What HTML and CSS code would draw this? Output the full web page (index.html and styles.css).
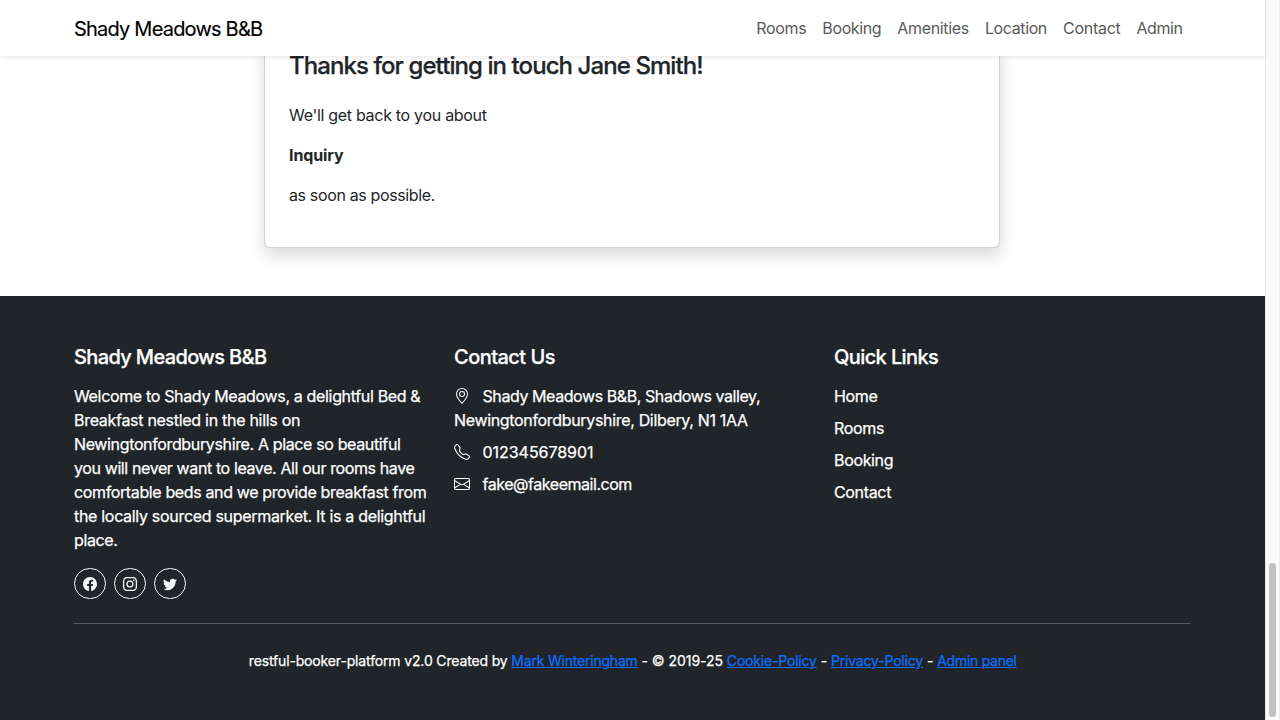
FILE: index.html
```html
<!DOCTYPE html>
<html lang="en">
<head>
<meta charset="utf-8">
<title>Shady Meadows B&amp;B</title>
<link rel="stylesheet" href="styles.css">
</head>
<body>
<div class="viewport">
  <div class="page">
    <nav class="navbar">
      <div class="container navbar-inner">
        <a class="brand">Shady Meadows B&amp;B</a>
        <div class="nav-links">
          <a class="w50">Rooms</a><a class="w59">Booking</a><a class="w72">Amenities</a><a class="w62">Location</a><a class="w57">Contact</a><a class="w46">Admin</a>
        </div>
      </div>
    </nav>
    <main class="contact">
      <div class="card">
        <h3 class="card-title">Thanks for getting in touch Jane Smith!</h3>
        <p class="t30">We'll get back to you about</p>
        <p class="subject">Inquiry</p>
        <p class="t36">as soon as possible.</p>
      </div>
    </main>
    <footer class="footer">
      <div class="container">
        <div class="columns">
          <div>
            <h5>Shady Meadows B&amp;B</h5>
            <p class="about"><span class="t34">Welcome to Shady Meadows, a delightful Bed &amp;</span><br><span class="t29">Breakfast nestled in the hills on</span><br><span class="t36">Newingtonfordburyshire. A place so beautiful</span><br><span class="t39">you will never want to leave. All our rooms have</span><br><span class="t37">comfortable beds and we provide breakfast from</span><br><span class="t31">the locally sourced supermarket. It is a delightful</span><br><span class="t37">place.</span></p>
            <div class="social">
              <a><svg viewBox="0 0 16 16"><path d="M16 8.049c0-4.446-3.582-8.05-8-8.05C3.58 0-.002 3.603-.002 8.05c0 4.017 2.926 7.347 6.75 7.951v-5.625h-2.03V8.05H6.75V6.275c0-2.017 1.195-3.131 3.022-3.131.876 0 1.791.157 1.791.157v1.98h-1.009c-.993 0-1.303.621-1.303 1.258v1.51h2.218l-.354 2.326H9.25V16c3.824-.604 6.75-3.934 6.75-7.951"/></svg></a>
              <a><svg viewBox="0 0 16 16"><path d="M8 0C5.829 0 5.556.01 4.703.048 3.85.088 3.269.222 2.76.42a3.9 3.9 0 0 0-1.417.923A3.9 3.9 0 0 0 .42 2.76C.222 3.268.087 3.85.048 4.7.01 5.555 0 5.827 0 8.001c0 2.172.01 2.444.048 3.297.04.852.174 1.433.372 1.942.205.526.478.972.923 1.417.444.445.89.719 1.416.923.51.198 1.09.333 1.942.372C5.555 15.99 5.827 16 8 16s2.444-.01 3.298-.048c.851-.04 1.434-.174 1.943-.372a3.9 3.9 0 0 0 1.416-.923c.445-.445.718-.891.923-1.417.197-.509.332-1.09.372-1.942C15.99 10.445 16 10.173 16 8s-.01-2.445-.048-3.299c-.04-.851-.175-1.433-.372-1.941a3.9 3.9 0 0 0-.923-1.417A3.9 3.9 0 0 0 13.24.42c-.51-.198-1.092-.333-1.943-.372C10.443.01 10.172 0 7.998 0zm-.717 1.442h.718c2.136 0 2.389.007 3.232.046.78.035 1.204.166 1.486.275.373.145.64.319.92.599s.453.546.598.92c.11.281.24.705.275 1.485.039.843.047 1.096.047 3.231s-.008 2.389-.047 3.232c-.035.78-.166 1.203-.275 1.485a2.5 2.5 0 0 1-.599.919c-.28.28-.546.453-.92.598-.28.11-.704.24-1.485.276-.843.038-1.096.047-3.232.047s-2.39-.009-3.233-.047c-.78-.036-1.203-.166-1.485-.276a2.5 2.5 0 0 1-.92-.598 2.5 2.5 0 0 1-.6-.92c-.109-.281-.24-.705-.275-1.485-.038-.843-.046-1.096-.046-3.233s.008-2.388.046-3.231c.036-.78.166-1.204.276-1.486.145-.373.319-.64.599-.92s.546-.453.92-.598c.282-.11.705-.24 1.485-.276.738-.034 1.024-.044 2.515-.045zm4.988 1.328a.96.96 0 1 0 0 1.92.96.96 0 0 0 0-1.92m-4.27 1.122a4.109 4.109 0 1 0 0 8.217 4.109 4.109 0 0 0 0-8.217m0 1.441a2.667 2.667 0 1 1 0 5.334 2.667 2.667 0 0 1 0-5.334"/></svg></a>
              <a><svg viewBox="0 0 16 16"><path d="M5.026 15c6.038 0 9.341-5.003 9.341-9.334q.002-.211-.006-.422A6.7 6.7 0 0 0 16 3.542a6.7 6.7 0 0 1-1.889.518 3.3 3.3 0 0 0 1.447-1.817 6.5 6.5 0 0 1-2.087.793A3.286 3.286 0 0 0 7.875 6.03a9.32 9.32 0 0 1-6.767-3.429 3.29 3.29 0 0 0 1.018 4.382A3.3 3.3 0 0 1 .64 6.575v.045a3.29 3.29 0 0 0 2.632 3.218 3.2 3.2 0 0 1-.865.115 3 3 0 0 1-.614-.057 3.28 3.28 0 0 0 3.067 2.277A6.6 6.6 0 0 1 .78 13.58a6 6 0 0 1-.78-.045A9.34 9.34 0 0 0 5.026 15"/></svg></a>
            </div>
          </div>
          <div>
            <h5 class="h-contact">Contact Us</h5>
            <ul>
              <li><svg class="bi" viewBox="0 0 16 16"><path d="M12.166 8.94c-.524 1.062-1.234 2.12-1.96 3.07A32 32 0 0 1 8 14.58a32 32 0 0 1-2.206-2.57c-.726-.95-1.436-2.008-1.96-3.07C3.304 7.867 3 6.862 3 6a5 5 0 0 1 10 0c0 .862-.305 1.867-.834 2.94M8 16s6-5.686 6-10A6 6 0 0 0 2 6c0 4.314 6 10 6 10"/><path d="M8 8a2 2 0 1 1 0-4 2 2 0 0 1 0 4m0 1a3 3 0 1 0 0-6 3 3 0 0 0 0 6"/></svg><span class="t42">Shady Meadows B&amp;B, Shadows valley,</span><br><span class="t33">Newingtonfordburyshire, Dilbery, N1 1AA</span></li>
              <li><svg class="bi" viewBox="0 0 16 16"><path d="M3.654 1.328a.678.678 0 0 0-1.015-.063L1.605 2.3c-.483.484-.661 1.169-.45 1.77a17.6 17.6 0 0 0 4.168 6.608 17.6 17.6 0 0 0 6.608 4.168c.601.211 1.286.033 1.77-.45l1.034-1.034a.678.678 0 0 0-.063-1.015l-2.307-1.794a.68.68 0 0 0-.58-.122l-2.19.547a1.75 1.75 0 0 1-1.657-.459L5.482 8.062a1.75 1.75 0 0 1-.46-1.657l.548-2.19a.68.68 0 0 0-.122-.58zM1.884.511a1.745 1.745 0 0 1 2.612.163L6.29 2.98c.329.423.445.974.315 1.494l-.547 2.19a.68.68 0 0 0 .178.643l2.457 2.457a.68.68 0 0 0 .644.178l2.189-.547a1.75 1.75 0 0 1 1.494.315l2.306 1.794c.829.645.905 1.87.163 2.611l-1.034 1.034c-.74.74-1.846 1.065-2.877.702a18.6 18.6 0 0 1-7.01-4.42 18.6 18.6 0 0 1-4.42-7.009c-.362-1.03-.037-2.137.703-2.877z"/></svg><span class="t04">012345678901</span></li>
              <li><svg class="bi" viewBox="0 0 16 16"><path d="M0 4a2 2 0 0 1 2-2h12a2 2 0 0 1 2 2v8a2 2 0 0 1-2 2H2a2 2 0 0 1-2-2zm2-1a1 1 0 0 0-1 1v.217l7 4.2 7-4.2V4a1 1 0 0 0-1-1zm13 2.383-4.708 2.825L15 11.105zm-.034 6.876-5.64-3.471L8 9.583l-1.326-.795-5.64 3.47A1 1 0 0 0 2 13h12a1 1 0 0 0 .966-.741M1 11.105l4.708-2.897L1 5.383z"/></svg><span class="t46">fake@fakeemail.com</span></li>
            </ul>
          </div>
          <div>
            <h5 class="h-links">Quick Links</h5>
            <ul class="t34">
              <li>Home</li>
              <li>Rooms</li>
              <li>Booking</li>
              <li>Contact</li>
            </ul>
          </div>
        </div>
        <hr>
        <p class="legal"><span class="s15">restful-booker-platform v2.0 Created by </span><a class="s21">Mark Winteringham</a><span class="s04"> - © 2019-25 </span><a>Cookie-Policy</a><span class="s04"> - </span><a>Privacy-Policy</a><span class="s04"> - </span><a class="s27">Admin panel</a></p>
      </div>
    </footer>
  </div>
  <div class="scrollbar"><div class="thumb"></div></div>
</div>
</body>
</html>
```
FILE: styles.css
```css
* { box-sizing: border-box; }
body { margin: 0; font: 400 16px/24px "Inter", sans-serif; color: #212529; background: #fff; }
h3, h5, p, ul { margin: 0; padding: 0; font-weight: 400; }
ul { list-style: none; }

.viewport { display: flex; width: 1280px; height: 720px; overflow: hidden; }
.page { display: flex; flex-direction: column; width: 1265px; height: 720px; }
.container { width: 1140px; margin: 0 0 0 62px; padding: 0 12px; }

.navbar { position: relative; z-index: 2; flex: none; height: 56px; background: #fff; box-shadow: 0 2px 4px rgba(0,0,0,.075); }
.navbar-inner { display: flex; align-items: center; justify-content: space-between; height: 56px; }
.brand { font-size: 20px; line-height: 30px; letter-spacing: -.79px; color: #000; padding-top: 2px; -webkit-text-stroke: .15px currentColor; }
.nav-links { display: flex; gap: 16px; padding-right: 7.5px; color: #595959; }
.w50 { width: 50.2px; letter-spacing: -.3px; }
.w59 { width: 59px; letter-spacing: -.37px; }
.w72 { width: 71.6px; letter-spacing: -.33px; }
.w62 { width: 62.1px; letter-spacing: -.38px; }
.w57 { width: 57.5px; letter-spacing: -.27px; }
.w46 { width: 46px; letter-spacing: -.44px; }

.contact { flex: none; height: 240px; }
.card { width: 736px; height: 208px; margin: -16px 0 0 264px; padding: 11px 24px 0; background: #fff; border: 1px solid #d3d3d4; border-top: 0; border-radius: 0 0 6px 6px; box-shadow: .5px 8px 16px rgba(0,0,0,.15); }
.card p { margin-bottom: 16px; }
.card .card-title { margin-bottom: 23px; font-size: 24px; line-height: 29px; font-weight: 500; letter-spacing: -.92px; -webkit-text-stroke: .25px currentColor; }
.card .subject { font-weight: 700; letter-spacing: -.1px; }

.footer { flex: 1; padding-top: 48px; background: #212529; color: #fff; -webkit-text-stroke: .25px currentColor; }
.columns { display: grid; grid-template-columns: repeat(3, 356px); column-gap: 24px; }
h5 { margin-bottom: 16px; font-size: 20px; line-height: 24px; font-weight: 500; letter-spacing: -.64px; padding-top: 1px; height: 24px; }
.h-contact { letter-spacing: -.54px; }
.h-links { letter-spacing: -.6px; }
.about { margin-bottom: 16px; white-space: nowrap; }
.columns li { margin-bottom: 8px; white-space: nowrap; }
.bi { width: 16px; height: 16px; margin-right: 12.5px; vertical-align: -2px; fill: currentColor; }
.social { display: flex; gap: 8px; height: 31px; }
.social a { display: flex; align-items: center; justify-content: center; width: 32px; height: 31px; border: 1px solid #f8f9fa; border-radius: 16px; }
.social svg { width: 14px; height: 14px; fill: #f8f9fa; }
hr { height: 1px; margin: 24px 0; border: 0; background: #585b5e; }
.legal { padding: 1px 0 0 1.5px; font-size: 14px; text-align: center; white-space: pre; }
.legal a { color: #0d6efd; text-decoration: underline; letter-spacing: -.185px; }

.t04 { letter-spacing: -.04px; }
.t29 { letter-spacing: -.29px; }
.t30 { letter-spacing: -.3px; }
.t31 { letter-spacing: -.31px; }
.t33 { letter-spacing: -.33px; }
.t34 { letter-spacing: -.34px; }
.t36 { letter-spacing: -.36px; }
.t37 { letter-spacing: -.37px; }
.t39 { letter-spacing: -.39px; }
.t42 { letter-spacing: -.42px; }
.t46 { letter-spacing: -.46px; }
.s15 { letter-spacing: -.15px; }
.s04 { letter-spacing: -.04px; }
.legal .s21 { letter-spacing: -.21px; }
.legal .s27 { letter-spacing: -.27px; }

.scrollbar { display: flex; align-items: flex-end; width: 15px; height: 720px; padding: 0 3px 3px; background: #fafafa; border-left: 1px solid #e8e8e8; border-right: 1px solid #ededed; }
.thumb { width: 8px; height: 154px; border-radius: 4px; background: #c1c1c1; }
```
